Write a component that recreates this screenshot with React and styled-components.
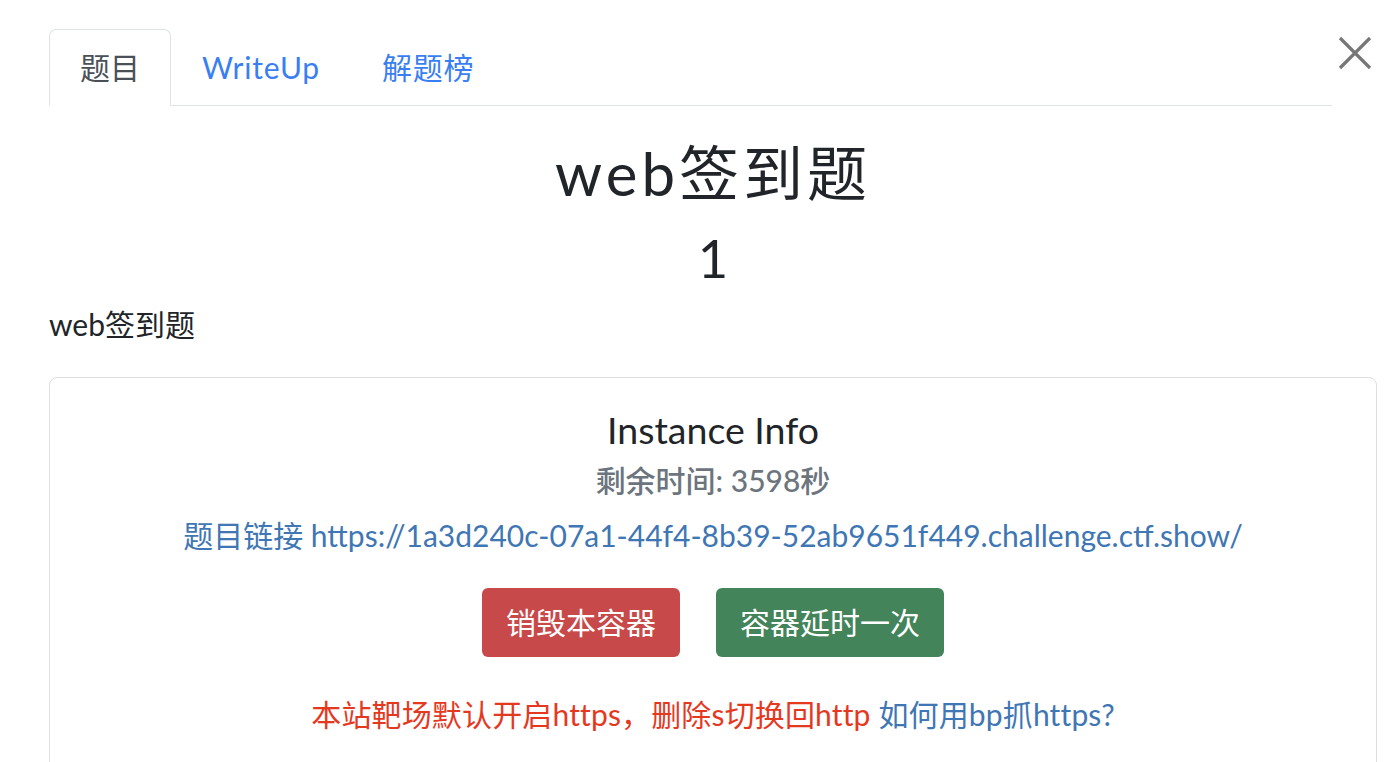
import React from "react";
import styled, { createGlobalStyle } from "styled-components";

const GlobalStyle = createGlobalStyle`
  html {
    font-size: 30px;
  }
  html, body {
    margin: 0;
    padding: 0;
    background: #ffffff;
    font-family: Lato, "Noto Sans CJK SC", "Noto Sans", sans-serif;
    color: #212529;
    line-height: 1.5;
  }
`;

function App() {
  return (
    <>
      <GlobalStyle />
      <Modal>
        <Header>
          <Tabs>
            <Tab active>题目</Tab>
            <Tab>WriteUp</Tab>
            <Tab>解题榜</Tab>
          </Tabs>
          <CloseButton aria-label="Close">
            <svg width="34" height="34" viewBox="0 0 34 34">
              <path
                d="M2 2 L32 32 M32 2 L2 32"
                stroke="#777777"
                strokeWidth="3.2"
                fill="none"
              />
            </svg>
          </CloseButton>
        </Header>

        <ChallengeName>web签到题</ChallengeName>
        <ChallengeValue>1</ChallengeValue>
        <Description>web签到题</Description>

        <Card>
          <CardTitle>Instance Info</CardTitle>
          <CardSubtitle>剩余时间: 3598秒</CardSubtitle>
          <LinkLine>
            题目链接 https://1a3d240c-07a1-44f4-8b39-52ab9651f449.challenge.ctf.show/
          </LinkLine>
          <Actions>
            <Button tone="danger">销毁本容器</Button>
            <Button tone="success">容器延时一次</Button>
          </Actions>
          <Notice>
            <Warn>本站靶场默认开启https，删除s切换回http</Warn>{" "}
            <HelpLink>如何用bp抓https?</HelpLink>
          </Notice>
        </Card>
      </Modal>
    </>
  );
}

const Modal = styled.div`
  padding: 29px 12px 0 49px;
`;

const Header = styled.div`
  display: flex;
  align-items: flex-start;
`;

const Tabs = styled.ul`
  flex: 1;
  display: flex;
  margin: 0;
  padding: 0;
  list-style: none;
  border-bottom: 1px solid #dee2e6;
`;

const Tab = styled.li`
  padding: 15px 30px;
  line-height: 45px;
  font-size: 1rem;
  letter-spacing: ${(p) => (p.active ? "0" : "0.8px")};
  margin-bottom: -1px;
  border: 1px solid ${(p) => (p.active ? "#dee2e6" : "transparent")};
  border-bottom-color: ${(p) => (p.active ? "#ffffff" : "transparent")};
  border-radius: 7px 7px 0 0;
  color: ${(p) => (p.active ? "#495057" : "#3a7ff2")};
  background: ${(p) => (p.active ? "#ffffff" : "transparent")};
`;

const CloseButton = styled.button`
  width: 45px;
  height: 60px;
  padding: 7px 0 0 6px;
  border: 0;
  background: transparent;
  display: flex;
  align-items: flex-start;
`;

const ChallengeName = styled.h2`
  margin: 31px 0 17px;
  text-align: center;
  font-size: 2rem;
  font-weight: 400;
  line-height: 1.2;
  letter-spacing: 4px;
`;

const ChallengeValue = styled.h3`
  margin: 0 0 13px;
  text-align: center;
  font-size: 1.75rem;
  font-weight: 400;
  line-height: 1.2;
`;

const Description = styled.p`
  margin: 0 0 30px;
  font-size: 1rem;
`;

const Card = styled.div`
  border: 1px solid #dfdfdf;
  border-radius: 8px;
  padding: 29px 37px 40px;
  text-align: center;
`;

const CardTitle = styled.h5`
  margin: 0 0 10px;
  font-size: 1.25rem;
  font-weight: 400;
  line-height: 1.2;
`;

const CardSubtitle = styled.h6`
  margin: 0 0 15px;
  font-size: 1rem;
  font-weight: 500;
  line-height: 1.2;
  color: #6c757d;
`;

const LinkLine = styled.p`
  margin: 0 0 30px;
  font-size: 1rem;
  color: #3f76b4;
`;

const Actions = styled.div`
  display: flex;
  justify-content: center;
  gap: 36px;
  margin-bottom: 35px;
`;

const Button = styled.button`
  font-family: inherit;
  font-size: 1rem;
  line-height: 1.5;
  padding: 11px 23px;
  border: 1px solid transparent;
  border-radius: 6px;
  color: #ffffff;
  background: ${(p) => (p.tone === "danger" ? "#c8494a" : "#44845b")};
`;

const Notice = styled.p`
  margin: 0;
  font-size: 1rem;
  letter-spacing: 0.15px;
`;

const Warn = styled.span`
  color: #e5391f;
`;

const HelpLink = styled.a`
  color: #3f76b4;
`;

export default App;
